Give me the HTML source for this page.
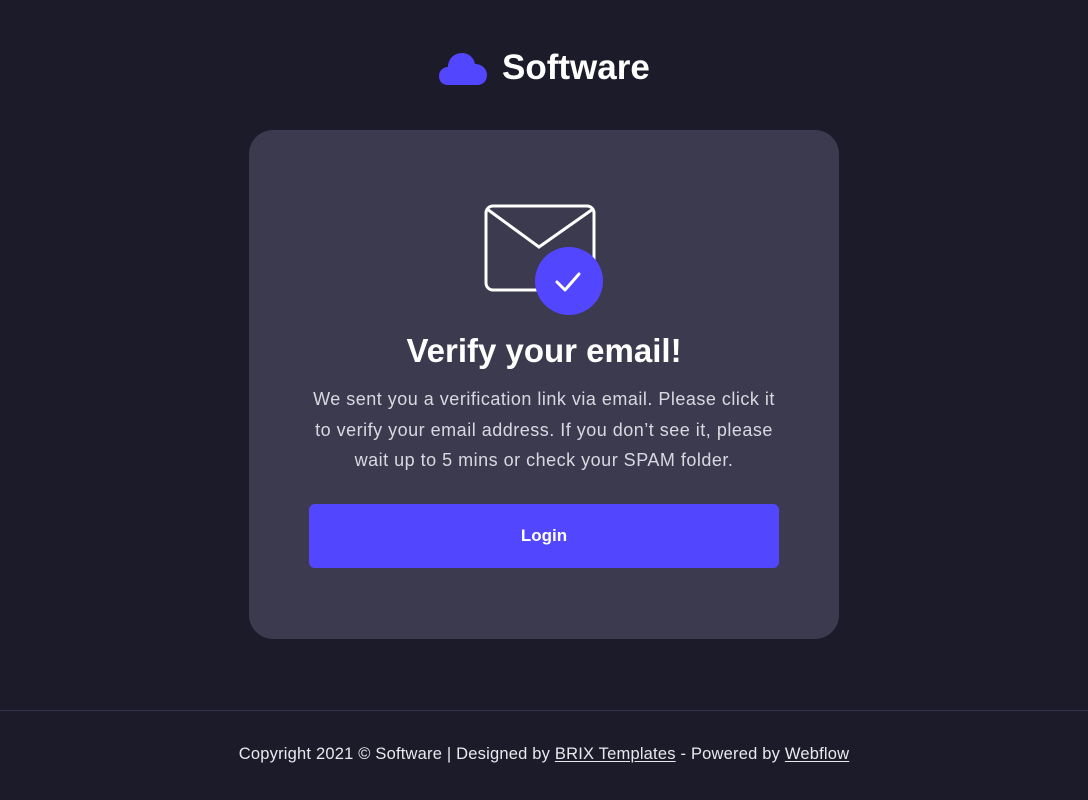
<!DOCTYPE html>
<html><head><meta charset="utf-8"><style>
*{margin:0;padding:0;box-sizing:border-box}
body{width:1088px;height:800px;background:#1c1b29;font-family:"Liberation Sans",sans-serif;color:#fff;position:relative;overflow:hidden}
.logo{position:absolute;top:48px;left:438px;display:flex;align-items:center}
.logo span{font-size:35px;font-weight:bold;margin-left:14px}
.card{position:absolute;left:249px;top:130px;width:590px;height:509px;background:#3b3a4e;border-radius:24px;text-align:center}
h1{position:absolute;top:202px;width:100%;font-size:33px;font-weight:bold}
p{position:absolute;top:254px;left:0;right:0;font-size:18px;line-height:30.5px;color:#d9d8e2;letter-spacing:0.5px;white-space:nowrap}
.btn{position:absolute;left:60px;top:374px;width:470px;height:64px;background:#5346ff;border-radius:6px;font-weight:bold;font-size:17px;line-height:64px}
.line{position:absolute;top:710px;left:0;width:100%;height:1px;background:#33324a}
.foot{position:absolute;top:745px;width:100%;text-align:center;font-size:16.5px;color:#e8e8ee;letter-spacing:0.2px}
.foot u{text-underline-offset:2px}
</style></head><body>
<div class="logo">
<svg width="50" height="36" viewBox="0 0 50 36"><path d="M10 35 C4 35 1 31 1 26 C1 21 5 17 10 17 C10 9 16 3 24 3 C31 3 36 8 37 14 C44 14 49 19 49 25 C49 31 45 35 39 35 Z" fill="#5346ff"/></svg>
<span>Software</span></div>
<div class="card">
<svg style="position:absolute;left:230px;top:70px" width="130" height="120" viewBox="0 0 130 120">
<rect x="7" y="6" width="108" height="84" rx="7" fill="none" stroke="#fff" stroke-width="3"/>
<path d="M8 9 L60 47 L114 9" fill="none" stroke="#fff" stroke-width="3"/>
<circle cx="90" cy="81" r="34" fill="#5346ff"/>
<path d="M78 82 L86 90 L100 74" fill="none" stroke="#fff" stroke-width="3" stroke-linecap="round" stroke-linejoin="round"/>
</svg>
<h1>Verify your email!</h1>
<p>We sent you a verification link via email. Please click it<br>to verify your email address. If you don’t see it, please<br>wait up to 5 mins or check your SPAM folder.</p>
<div class="btn">Login</div>
</div>
<div class="line"></div>
<div class="foot">Copyright 2021 © Software | Designed by <u>BRIX Templates</u> - Powered by <u>Webflow</u></div>
</body></html>
